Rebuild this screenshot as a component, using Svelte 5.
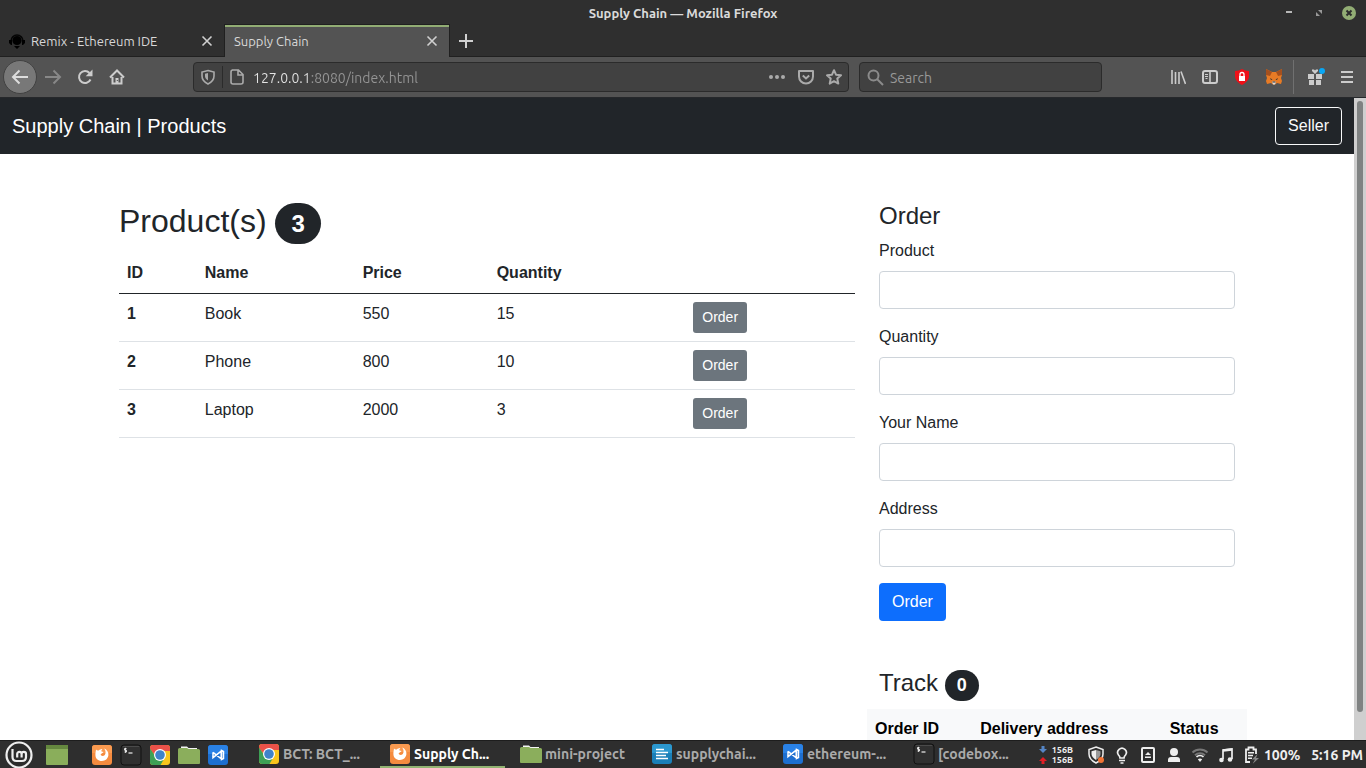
<script>
  const products = [
    { id: 1, name: 'Book', price: 550, quantity: 15 },
    { id: 2, name: 'Phone', price: 800, quantity: 10 },
    { id: 3, name: 'Laptop', price: 2000, quantity: 3 }
  ];
  const fields = [
    { id: 'product', label: 'Product' },
    { id: 'quantity', label: 'Quantity' },
    { id: 'name', label: 'Your Name' },
    { id: 'address', label: 'Address' }
  ];
  const launchers = ['firefox', 'terminal', 'chrome', 'folder', 'code'];
  const tasks = [
    { icon: 'chrome', title: 'BCT: BCT_...' },
    { icon: 'firefox', title: 'Supply Ch...', active: true },
    { icon: 'folder', title: 'mini-project' },
    { icon: 'writer', title: 'supplychai...' },
    { icon: 'code', title: 'ethereum-...' },
    { icon: 'terminal', title: '[codebox...' }
  ];
  let url = $state('127.0.0.1:8080/index.html');
</script>

{#snippet appIcon(kind)}
  <svg class="app-icon" viewBox="0 0 22 22" aria-hidden="true">
    {#if kind === 'firefox'}
      <rect x="1" y="1" width="20" height="20" rx="3" fill="#f58b3f" />
      <path d="M1 4a3 3 0 0 1 3-3h14a3 3 0 0 1 3 3v5H1z" fill="#fa9a50" />
      <path d="M5 5.500c.8 1 1.500 1.200 2.700 1C8.700 5.500 10 5 11.500 5c-1 .8-1.200 1.600-1 2.400l2 .6c-.5 1.400-2.600 1.400-2.900 2.600.3 1.500 2.600 2 4.200.5 1.300-1.800 1-4.600-.7-6.600 3 1.200 4.600 3.600 4.300 6.800-.5 3.400-3 5.700-6.500 5.700C7 17 4.400 14.600 4.400 11c0-2 .4-4 .6-5.500z" fill="#fff" />
    {:else if kind === 'terminal'}
      <rect x="1" y="1" width="20" height="20" rx="3" fill="#303030" stroke="#111" />
      <path d="M3 2.500h16" stroke="#4a4a4a" />
      <path d="M6.500 4.500H4.500v1.700h2v1.800h-2M5.500 3.800v5" fill="none" stroke="#eee" stroke-width=".9" />
      <path d="M8.500 9h4" stroke="#eee" stroke-width="1.200" />
    {:else if kind === 'chrome'}
      <rect x="1" y="1" width="20" height="20" rx="3" fill="#f8c61c" />
      <path d="M1 5V4a3 3 0 0 1 3-3h14a3 3 0 0 1 3 3v3H11L6.500 12z" fill="#ea5149" />
      <path d="M1 4.500 7.500 14l4 2-2.500 5H4a3 3 0 0 1-3-3z" fill="#3ea055" />
      <path d="M7 13.500 11 16l4-1-3.500 6H8z" fill="#3ea055" />
      <circle cx="11" cy="11" r="6" fill="#fff" />
      <circle cx="11" cy="11" r="4.800" fill="#3f83c9" />
    {:else if kind === 'folder'}
      <path d="M3 4V2.500h6L10.500 4H19v3H3z" fill="#f4f4f4" />
      <path d="M0 5.500Q0 4 1.500 4H9l1.500 1h10Q22 5 22 6.500V19q0 1-1 1H1q-1 0-1-1z" fill="#8bae5c" />
    {:else if kind === 'writer'}
      <rect x="1" y="1" width="20" height="20" rx="3" fill="#1b7fb8" />
      <path d="M1 4a3 3 0 0 1 3-3h14a3 3 0 0 1 3 3v6H1z" fill="#2c98cf" />
      <path d="M5 6.500h8M5 9.500h12M5 12.500h10M5 15.500h12" stroke="#fff" stroke-width="1.400" />
    {:else}
      <rect x="1" y="1" width="20" height="20" rx="3" fill="#1d6fd0" />
      <path d="M1 4a3 3 0 0 1 3-3h14a3 3 0 0 1 3 3v6H1z" fill="#2a82e6" />
      <path d="M6 8.300v5.400l8.200-6.500v7.600L6 8.300m0 5.400L14.200 7M14.500 6.500l2 1v7l-2 1z" fill="none" stroke="#fff" stroke-width="1.500" />
    {/if}
  </svg>
{/snippet}

<div class="desktop">
  <header class="titlebar">
    <span class="title">Supply Chain — Mozilla Firefox</span>
    <div class="window-controls">
      <button aria-label="Minimize"><svg width="14" height="14" viewBox="0 0 14 14"><path d="M4 6h6" stroke="#b8b8b8" stroke-width="2" /></svg></button>
      <button aria-label="Restore"><svg width="14" height="14" viewBox="0 0 14 14"><path d="M6 4h4v4zM4 6v4h4z" fill="#999" /></svg></button>
      <button aria-label="Close"><svg width="14" height="14" viewBox="0 0 14 14"><circle cx="7" cy="7" r="7" fill="#92ad74" /><path d="M4.500 4.500l5 5m0-5l-5 5" stroke="#2c2c2c" stroke-width="2" /></svg></button>
    </div>
  </header>

  <div class="tabs">
    <div class="tab">
      <svg class="favicon" width="16" height="16" viewBox="0 0 16 16"><path d="M2 8a6 6 0 0 1 12 0" fill="none" stroke="#050505" stroke-width="1.500" /><circle cx="8" cy="7.500" r="4.600" fill="#000" /><path d="M0 7h3v5H2L0 10zM16 7h-3v5h1l2-2zM5 13h6l-3 3z" fill="#000" /></svg>
      <span>Remix - Ethereum IDE</span>
      <button aria-label="Close tab"><svg width="12" height="12" viewBox="0 0 12 12"><path d="M1.500 1.500l9 9m0-9l-9 9" stroke="#d0d0d0" stroke-width="1.600" /></svg></button>
    </div>
    <div class="tab active">
      <span>Supply Chain</span>
      <button aria-label="Close tab"><svg width="12" height="12" viewBox="0 0 12 12"><path d="M1.500 1.500l9 9m0-9l-9 9" stroke="#d0d0d0" stroke-width="1.600" /></svg></button>
    </div>
    <button class="new-tab" aria-label="New tab"><svg width="14" height="14" viewBox="0 0 14 14"><path d="M7 0v14M0 7h14" stroke="#d0d0d0" stroke-width="2" /></svg></button>
  </div>

  <div class="toolbar">
    <nav class="tools" aria-label="Navigation">
      <button class="back" aria-label="Back"><svg width="18" height="18" viewBox="0 0 18 18"><path d="M17 9H2m6.500-6.500L2 9l6.500 6.500" class="line" /></svg></button>
      <button class="dim" aria-label="Forward"><svg width="18" height="18" viewBox="0 0 18 18"><path d="M1 9h15M9.500 2.500L16 9l-6.500 6.500" class="line" /></svg></button>
      <button aria-label="Reload"><svg width="16" height="16" viewBox="0 0 16 16"><path d="M13.500 10.500A6 6 0 1 1 12.500 4" class="line" /><path d="M15.500 .5v6.800H8.700z" fill="currentColor" /></svg></button>
      <button aria-label="Home"><svg width="16" height="16" viewBox="0 0 16 16"><path d="M1 8.500L8 1.500l7 7M3.500 8v6.500h9V8" class="line" /><path d="M6.500 9h3v6h-3z" fill="currentColor" /><path d="M7.800 11h1v1h-1z" fill="#444" /></svg></button>
    </nav>
    <span class="space"></span>
    <div class="field url">
      <svg width="16" height="16" viewBox="0 0 16 16"><path d="M8 1.500L14 3v4c0 3.500-2 6-6 8-4-2-6-4.500-6-8V3z" class="line thin" /><path d="M8 4v7.500C6 10.200 5 8.800 5 7V4.700z" fill="currentColor" /></svg>
      <i class="field-line"></i>
      <svg width="16" height="16" viewBox="0 0 16 16"><path d="M3 1h6.500L14 5.500V13q0 2-2 2H4q-2 0-2-2V3q0-2 2-2M9 1v5h5" class="line thin" /></svg>
      <input aria-label="Address" bind:value={url} />
      <svg width="18" height="16" viewBox="0 0 18 16"><circle cx="3" cy="8" r="2" /><circle cx="9" cy="8" r="2" /><circle cx="15" cy="8" r="2" /></svg>
      <svg class="pocket" width="16" height="16" viewBox="0 0 16 16"><path d="M1 2h14v5.500a7 7 0 0 1-14 0z" class="line" stroke-linejoin="round" /><path d="M4.800 6.500L8 9.500l3.200-3" class="line" /></svg>
      <svg width="16" height="16" viewBox="0 0 16 16"><path d="M8 1.200l2 4.500 5 .6-3.700 3.300 1 5L8 12.200l-4.300 2.400 1-5L1 6.300l5-.6z" class="line" stroke-linejoin="round" /></svg>
    </div>
    <div class="field search">
      <svg width="17" height="17" viewBox="0 0 17 17"><circle cx="6.500" cy="6.500" r="5" class="line" /><path d="M10 10l6 6" class="line" /></svg>
      <input aria-label="Search" placeholder="Search" />
    </div>
    <span class="space"></span>
    <div class="tools">
      <button aria-label="Library"><svg width="16" height="16" viewBox="0 0 16 16"><path d="M2 1v14M5.500 3v12M9 3v12M11 2.500L15.500 15" class="line thin" /></svg></button>
      <button aria-label="Sidebars"><svg width="16" height="16" viewBox="0 0 16 16"><rect x="1" y="2" width="14" height="12" rx="2" class="line" /><path d="M8 2v12" class="line thin" /><path d="M3 5.500h3M3 7.500h3M3.500 9.500h2" stroke="currentColor" /></svg></button>
      <button aria-label="Blocker"><svg width="16" height="16" viewBox="0 0 16 16"><path d="M8 0Q11 2 15 2v5c0 4-3 7-7 9-4-2-7-5-7-9V2Q5 2 8 0z" fill="#ee1018" /><path d="M6 7V5.500a2 2 0 0 1 4 0V7" fill="none" stroke="#fff" stroke-width="1.300" /><path d="M5 7h6v5H5z" fill="#fff" /></svg></button>
      <button aria-label="Wallet"><svg width="16" height="16" viewBox="0 0 16 16"><path d="M0 0l6 3h4l6-3v6l-1 3 1 3-1 3-4-1-2 1.500H7L5 14l-4 1-1-3 1-3-1-3z" fill="#e87b25" /><path d="M0 0l6 3-2 4-4-1zM16 0l-6 3 2 4 4-1z" fill="#a5501e" /><path d="M4 9l2.500 1.500L5 11zM12 9l-2.500 1.500L11 11z" fill="#333" /><path d="M6 12.500h4l-1 3H7z" fill="#ddd" /><path d="M6.500 12.500h3v1h-3z" fill="#333" /></svg></button>
      <i class="separator"></i>
      <button class="gift" aria-label="What's new"><svg width="20" height="18" viewBox="0 0 20 18"><path d="M3 6h6v5H3zM11 6h6v5h-6zM4 12h5v5H4zM11 12h5v5h-5z" fill="currentColor" /><path d="M10 6L7 3V1.500h2l1 1 1-1h2V3z" fill="currentColor" /><circle cx="17.500" cy="3" r="3.300" fill="#535353" /><circle cx="17" cy="3" r="3" fill="#08a7f5" /></svg></button>
      <button aria-label="Menu"><svg width="12" height="12" viewBox="0 0 12 12"><path d="M0 1h12M0 6h12M0 11h12" stroke="currentColor" stroke-width="2" /></svg></button>
    </div>
  </div>

  <div class="viewport">
    <div class="page">
      <nav class="navbar">
        <a class="brand" href="#products">Supply Chain | Products</a>
        <button class="btn outline">Seller</button>
      </nav>
      <main class="container">
        <section class="products" id="products">
          <h2>Product(s) <span class="badge">3</span></h2>
          <table>
            <thead><tr><th>ID</th><th>Name</th><th>Price</th><th>Quantity</th><th></th></tr></thead>
            <tbody>
              {#each products as p (p.id)}
                <tr><th>{p.id}</th><td>{p.name}</td><td>{p.price}</td><td>{p.quantity}</td><td><button class="btn small">Order</button></td></tr>
              {/each}
            </tbody>
          </table>
        </section>
        <section class="side">
          <h4>Order</h4>
          <form onsubmit={(e) => e.preventDefault()}>
            {#each fields as f (f.id)}
              <div class="form-row"><label for={f.id}>{f.label}</label><input id={f.id} type="text" /></div>
            {/each}
            <button class="btn primary">Order</button>
          </form>
          <h4 class="track">Track <span class="badge">0</span></h4>
          <table class="orders">
            <thead><tr><th>Order ID</th><th>Delivery address</th><th>Status</th></tr></thead>
          </table>
        </section>
      </main>
    </div>
    <div class="scrollbar"><div class="thumb"></div></div>
  </div>

  <footer class="taskbar">
    <button class="mint" aria-label="Menu"><svg width="28" height="28" viewBox="0 0 28 28"><circle cx="14" cy="14" r="12.500" fill="#2b2b2b" stroke="#eee" stroke-width="2.200" /><path d="M7.500 8v8q0 4 4 4h5.500q4 0 4-4v-3a2.200 2.200 0 0 0-4.400 0v3.500m0-3.500a2.200 2.200 0 0 0-4.400 0v3.500" fill="none" stroke="#eee" stroke-width="2.200" /></svg></button>
    <button class="show-desktop" aria-label="Show desktop"><svg width="22" height="20" viewBox="0 0 22 20"><rect width="22" height="20" rx="1" fill="#8aae5b" /><path d="M0 0h22v4H0z" fill="#65883f" /></svg></button>
    <div class="launchers">
      {#each launchers as kind}
        <button aria-label={kind}>{@render appIcon(kind)}</button>
      {/each}
    </div>
    <div class="tasks">
      {#each tasks as t}
        <button class="task" class:current={t.active}>{@render appIcon(t.icon)}<span>{t.title}</span></button>
      {/each}
    </div>
    <div class="tray">
      <div class="network">
        <svg width="8" height="20" viewBox="0 0 8 20"><path d="M2.500 1h3v3H8L4 8 0 4h2.500z" fill="#5585c5" /><path d="M2.500 19h3v-3H8l-4-4-4 4h2.500z" fill="#e01f26" /></svg>
        <div><span>156B</span><span>156B</span></div>
      </div>
      <svg width="18" height="18" viewBox="0 0 18 18"><path d="M9 1l7 2.500V8c0 4-3 7-7 9-4-2-7-5-7-9V3.500z" fill="none" stroke="#eee" stroke-width="1.500" /><path d="M9 4v10C6 12 4.500 10 4.500 8V5.200z" fill="#eee" /><path d="M9 4v10c3-2 4.500-4 4.500-6V5.200z" fill="#999" /><circle cx="14" cy="14" r="3" fill="#f37435" /></svg>
      <svg width="18" height="18" viewBox="0 0 18 18"><path d="M7 12q0-1.500-1.500-3a4.300 4.300 0 1 1 7 0Q11 10.500 11 12z" fill="none" stroke="#eee" stroke-width="1.700" /><path d="M6 14.500h6M7.500 17h3" stroke="#eee" stroke-width="1.500" /></svg>
      <svg width="18" height="18" viewBox="0 0 18 18"><rect x="3" y="2" width="12" height="14" rx="1" fill="none" stroke="#eee" stroke-width="2" /><path d="M6 9l3-3 3 3zM6 10.500h6V12H6z" fill="#eee" /></svg>
      <svg width="18" height="18" viewBox="0 0 18 18"><circle cx="9" cy="6" r="4" fill="#eee" /><path d="M3 16v-2q0-3 3-3h6q3 0 3 3v2z" fill="#eee" /></svg>
      <svg width="18" height="18" viewBox="0 0 18 18"><path d="M1.500 6.500a11 11 0 0 1 15 0M4 9.200a7.500 7.500 0 0 1 10 0" fill="none" stroke="#777" stroke-width="2" /><path d="M5.500 11a5 5 0 0 1 7 0" fill="none" stroke="#eee" stroke-width="1.700" /><path d="M6.800 13.300a3.500 3.500 0 0 1 4.400 0L9 16z" fill="#eee" /></svg>
      <svg width="18" height="18" viewBox="0 0 18 18"><path d="M6 13V4l9-1v10" fill="none" stroke="#eee" stroke-width="1.700" /><path d="M6 4.500l9-1" stroke="#eee" stroke-width="2.500" /><circle cx="4.500" cy="14" r="2.300" fill="#eee" /><circle cx="13" cy="13.500" r="2.300" fill="#eee" /></svg>
      <svg width="18" height="18" viewBox="0 0 18 18"><path d="M7 16H3V3.500h2.500v-2h5v2H13V8" fill="none" stroke="#eee" stroke-width="1.800" /><path d="M5 6h6v1.500H5zM5 8.800h5v1.500H5zM5 11.600h4v1.500H5z" fill="#eee" /><path d="M14.500 8L9 13.500h3L9.500 18l6.500-6h-3z" fill="#888" /></svg>
      <span class="battery">100%</span>
      <time>5:16 PM</time>
    </div>
  </footer>
</div>

<style>
  :global(body) { margin: 0; }
  * { box-sizing: border-box; }
  .desktop { height: 100vh; display: flex; flex-direction: column; overflow: hidden; font: 13px/18px "Ubuntu", "Noto Sans", sans-serif; }
  button { font: inherit; border: 0; padding: 0; background: none; color: inherit; }
  svg { display: block; flex: none; }
  .titlebar { height: 24px; flex: none; display: grid; grid-template-columns: 1fr auto 1fr; align-items: center; padding: 2px 10px 0; background: #2f2f2f; color: #dadada; font-weight: 700; }
  .title { grid-column: 2; }
  .window-controls { display: flex; justify-content: flex-end; gap: 16px; }
  .window-controls button { height: 16px; }
  .tabs { height: 33px; flex: none; display: flex; background: #2f2f2f; color: #d8d8d8; box-shadow: inset 0 -1px #202020; }
  .tab { width: 224px; display: flex; align-items: center; gap: 6px; padding: 0 11px 0 9px; border-top: 1px solid transparent; }
  .tab span { flex: 1; }
  .tab.active { width: 226px; background: #535353; border: 1px solid #202020; border-width: 1px 1px 0; box-shadow: inset 0 2px #92ad74; }
  .new-tab { padding: 0 9px; }
  .toolbar { height: 41px; flex: none; display: flex; align-items: center; padding: 0 3px; background: #535353; border-bottom: 1px solid #26282b; color: #ccc; }
  .tools { display: flex; align-items: center; }
  .tools button { width: 32px; height: 34px; display: grid; place-items: center; }
  .tools .back { width: 34px; border: 1px solid #414141; border-radius: 50%; background: #787878; color: #ddd; }
  .tools .dim { color: #888; }
  .space { flex: 1 1 60px; }
  .line { fill: none; stroke: currentColor; stroke-width: 2; }
  .line.thin { stroke-width: 1.600; }
  .field { height: 30px; display: flex; align-items: center; border: 1px solid #2b2b2b; border-radius: 4px; background: #414141; color: #aaa; fill: #aaa; }
  .url { flex: 4 1 656px; gap: 12px; padding: 0 6px; margin-right: 10px; }
  .url .field-line { width: 1px; height: 22px; margin: 0 -6px; background: #2b2b2b; }
  .url input { margin-left: -4px; color: transparent; background: linear-gradient(90deg, #e4e4e4 58px, #959595 58px); background-clip: text; -webkit-background-clip: text; }
  .search { flex: 1 1 243px; gap: 6px; padding: 0 7px; color: #8b8b8b; }
  .field input { flex: 1; min-width: 0; width: 0; height: 28px; border: 0; padding: 2px 0 0; outline: 0; font: 14px/20px "Ubuntu", "Noto Sans", sans-serif; }
  .search input { background: none; color: #ddd; }
  .search input::placeholder { color: #989898; opacity: 1; }
  .separator { width: 1px; height: 34px; margin: 0 5px 0 3px; background: #707070; }

  .viewport { flex: 1; min-height: 0; display: flex; background: #fff; }
  .page { flex: 1; min-width: 0; overflow: hidden; color: #212529; font: 16px/24px "Liberation Sans", Arial, sans-serif; }
  .scrollbar { width: 12px; padding: 3px; background: #cfcfcf; }
  .thumb { height: 96%; border-radius: 3px; background: #7f8282; }
  .navbar { display: flex; justify-content: space-between; align-items: center; padding: 8px 12px; background: #212529; }
  .brand { padding: 5px 0; color: #fff; font-size: 20px; line-height: 30px; text-decoration: none; }
  .btn { padding: 6px 12px; border: 1px solid transparent; border-radius: 4px; color: #fff; font: 16px/24px "Liberation Sans", Arial, sans-serif; }
  .outline { border-color: #f8f9fa; color: #f8f9fa; }
  .primary { background: #0d6efd; }
  .small { display: block; padding: 4px 8px; border-radius: 3px; background: #6c757d; font-size: 14px; line-height: 21px; }
  .container { max-width: 1140px; margin: 48px auto 0; display: grid; grid-template-columns: 2fr 1fr; }
  section { padding: 0 12px; min-width: 0; }
  h2, h4 { margin: 0 0 9px; font-weight: 400; }
  h2 { font-size: 32px; line-height: 38px; }
  h4 { font-size: 24px; line-height: 28px; }
  .badge { display: inline-block; padding: 8px 16px; border-radius: 24px; background: #212529; color: #fff; font-size: 24px; line-height: 25px; font-weight: 700; vertical-align: baseline; }
  h4 .badge { padding: 6px 12px; font-size: 18px; line-height: 19px; }
  table { width: 100%; border-collapse: collapse; }
  th, td { padding: 8px; text-align: left; vertical-align: top; border-bottom: 1px solid #dee2e6; }
  thead th { border-color: #212529; }
  .form-row { margin-bottom: 16px; }
  label { display: block; margin-bottom: 8px; }
  .form-row input { display: block; width: 100%; height: 38px; padding: 6px 12px; border: 1px solid #ced4da; border-radius: 4px; font: inherit; }
  .track { margin: 48px 0 8px; }
  .orders { width: calc(100% + 24px); margin: 0 -12px; background: #f8f9fa; color: #000; }

  .taskbar { height: 28px; flex: none; display: flex; align-items: center; padding: 0 3px 0 5px; background: #2e2e2e; color: #aaa; font-size: 14px; font-weight: 700; border-top: 1px solid #1d1d1d; }
  .app-icon { width: 22px; height: 22px; }
  .show-desktop { margin-left: 13px; }
  .launchers { display: flex; gap: 7px; margin-left: 23px; }
  .tasks { display: flex; align-self: stretch; gap: 6px; margin-left: 20px; }
  .task { width: 125px; display: flex; align-items: center; gap: 3px; padding: 0 9px; border-bottom: 2px solid transparent; white-space: nowrap; }
  .task.current { color: #fff; border-color: #92b372; }
  .tray { display: flex; align-items: center; gap: 8px; margin-left: auto; color: #eee; white-space: nowrap; }
  .network { display: flex; align-items: center; gap: 5px; margin-right: 6px; font-size: 9px; line-height: 10px; }
  .network span { display: block; }
  .battery { margin-left: -5px; }
  time { margin-left: 3px; }
</style>
